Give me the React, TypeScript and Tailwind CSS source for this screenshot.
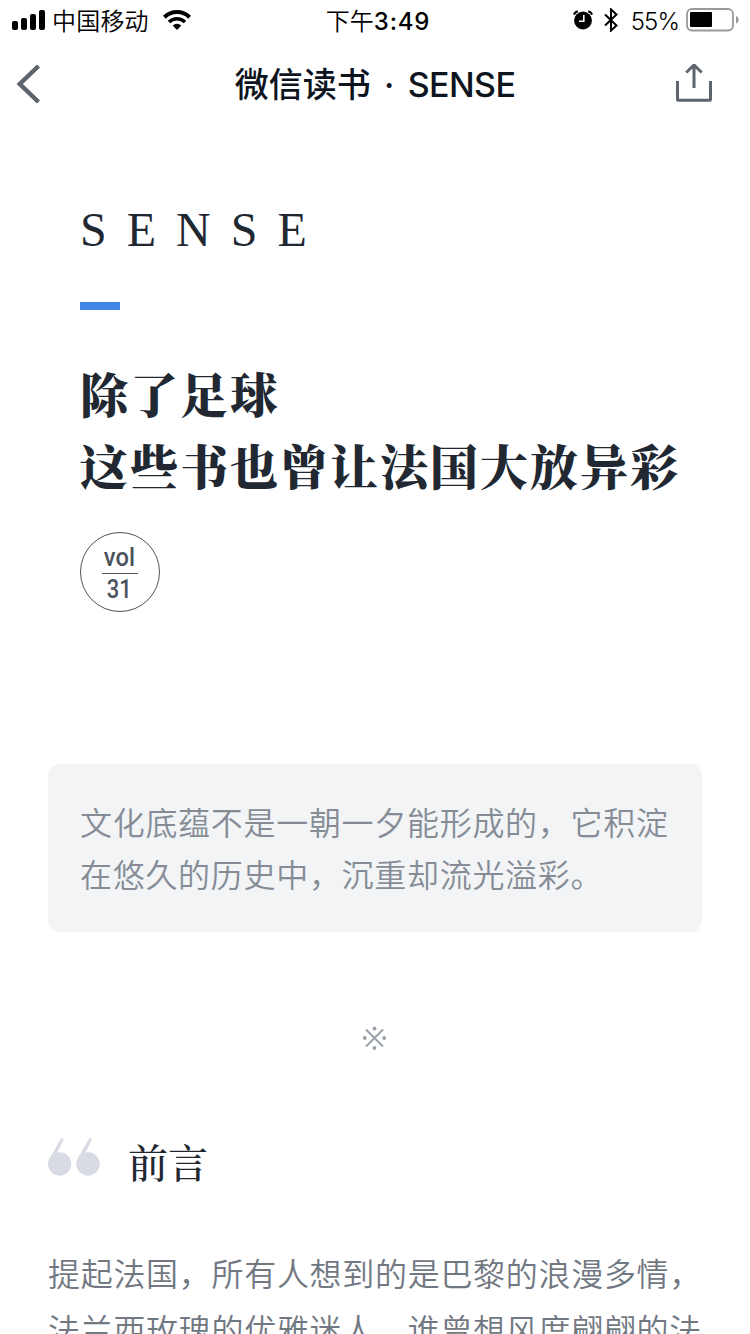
import React from "react";

const SANS = "font-['Inter','Noto_Sans_CJK_SC',sans-serif]";
const SONG = "font-['Noto_Serif_CJK_SC','Source_Han_Serif_SC','Songti_SC','Noto_Sans_CJK_SC',serif]";

const titleLines = ["除了足球", "这些书也曾让法国大放异彩"];
const quoteLines = ["文化底蕴不是一朝一夕能形成的，它积淀", "在悠久的历史中，沉重却流光溢彩。"];
const bodyLines = ["提起法国，所有人想到的是巴黎的浪漫多情，", "法兰西玫瑰的优雅迷人，谁曾想风度翩翩的法"];

function StatusBar(): JSX.Element {
    return (
        <div className="grid h-10 shrink-0 grid-cols-3 items-center text-black">
            <div className="flex items-center pl-3">
                <svg width="33" height="20" viewBox="0 0 33 20">
                    <rect x="0" y="11" width="6" height="9" rx="2" />
                    <rect x="9" y="8" width="6" height="12" rx="2" />
                    <rect x="18" y="4" width="6" height="16" rx="2" />
                    <rect x="27" y="0" width="6" height="20" rx="2" />
                </svg>
                <span className="ml-[7px] pt-[3px] text-[24px] leading-[37px] font-[350] tracking-[0.2px]">中国移动</span>
                <svg className="ml-[14px]" width="28" height="20" viewBox="0 0 28 20">
                    <path d="M1.4 7.2a18 18 0 0 1 25.2 0" fill="none" stroke="#000" strokeWidth="4" />
                    <path d="M6 12a11.4 11.4 0 0 1 16 0" fill="none" stroke="#000" strokeWidth="3.6" />
                    <path d="M14 20l-4.3-4.4a6.2 6.2 0 0 1 8.6 0z" />
                </svg>
            </div>
            <div className="flex items-center justify-center pt-[3px] pl-1.5 leading-[37px]">
                <span className="text-[24px] font-[350]">下午</span>
                <span className="text-[24px] font-medium tracking-[0.8px]">3:49</span>
            </div>
            <div className="flex items-center justify-end pr-[11px]">
                <svg width="20" height="20" viewBox="0 0 20 20">
                    <circle cx="10" cy="10.500" r="8.900" />
                    <path d="M.9 4.600Q2 2 4.800 1.300M19.100 4.600Q18 2 15.200 1.300" fill="none" stroke="#000" strokeWidth="2.200" />
                    <path d="M10.800 5v6.300H6" fill="none" stroke="#fff" strokeWidth="1.600" />
                </svg>
                <svg className="ml-[11px]" width="14" height="24" viewBox="0 0 14 24">
                    <path d="M1 6.500l11.500 11L7 22.600V1.400l5.500 5.100L1 17.500" fill="none" stroke="#000" strokeWidth="2" />
                </svg>
                <span className="ml-[13px] pt-[3px] text-[24px] leading-[37px] font-[350] tracking-[-0.9px]">55%</span>
                <svg className="ml-[7px]" width="53" height="24" viewBox="0 0 53 24">
                    <rect x="1" y="1" width="46" height="21.500" rx="5" fill="none" stroke="#999" strokeWidth="1.800" />
                    <rect x="4" y="4" width="22" height="15" rx="1" />
                    <path d="M50 8c3.500 1 3.500 6.500 0 7.500z" fill="#999" />
                </svg>
            </div>
        </div>
    );
}

function NavBar(): JSX.Element {
    return (
        <div className="flex h-[88px] shrink-0 items-center justify-between pr-[38px] pl-4">
            <svg width="60" height="40" viewBox="0 0 60 40" fill="none" stroke="#5d646e" strokeWidth="4.500">
                <path d="M22.500 2L3.800 20l18.700 18" />
            </svg>
            <h1 className="mr-[22px] flex pt-px text-[34px] leading-[87px] font-medium text-[#0d141e]">
                <span className="ml-[22px]">微信读书</span>
                <span className="w-[37px] text-center">·</span>
                <span className="font-[550] tracking-[-0.6px]">SENSE</span>
            </h1>
            <svg width="38" height="40" viewBox="0 0 38 40" fill="none" stroke="#5d646e" strokeWidth="3">
                <path d="M3.500 17v18.200q0 1 1 1h31q1 0 1-1V17M20 24V1M12.300 8.500L20 1l7.700 7.500" />
            </svg>
        </div>
    );
}

function VolBadge(): JSX.Element {
    return (
        <div className="mt-7 flex h-20 w-20 flex-col items-center rounded-full border border-[#4c535d] pt-[11px] font-['Roboto',sans-serif] text-[25px] font-medium text-[#4c535d]">
            <span className="mr-0.5 h-[29px] origin-center scale-x-95 leading-[28px]">vol</span>
            <div className="h-px w-9 bg-[#4c535d]" />
            <span className="mr-0.5 h-[30px] origin-center scale-x-88 leading-[31px]">31</span>
        </div>
    );
}

export default function App(): JSX.Element {
    return (
        <div lang="zh-CN" className={`flex h-[1334px] w-[750px] flex-col overflow-hidden bg-white ${SANS}`}>
            <StatusBar />
            <NavBar />
            <header className="flex flex-col px-20 pt-[72px] text-[#212832]">
                <div className="font-['Liberation_Serif',serif] text-[48px] leading-[60px] tracking-[20px]">SENSE</div>
                <div className="mt-[42px] h-2 w-10 bg-[#4285e5]" />
                <h2 className={`mt-[47px] mb-[3px] text-[48px] leading-[72px] font-black tracking-[2px] whitespace-nowrap ${SONG}`}>
                    {titleLines.map((line) => (
                        <div key={line}>{line}</div>
                    ))}
                </h2>
                <VolBadge />
            </header>
            <blockquote className="mx-12 mt-[152px] h-[168px] shrink-0 rounded-xl bg-[#f3f4f6] px-8 pt-[34px] text-[32px] leading-[52px] font-[350] tracking-[0.7px] whitespace-nowrap text-[#858c96]">
                {quoteLines.map((line) => (
                    <p key={line}>{line}</p>
                ))}
            </blockquote>
            <div className="mt-[93px] flex justify-center">
                <svg width="26" height="26" viewBox="0 0 26 26" fill="#9ba1aa">
                    <path d="M4 4.500l17 17M21 4.500l-17 17" stroke="#9ba1aa" strokeWidth="2" />
                    <circle cx="12.500" cy="3.500" r="1.900" />
                    <circle cx="2.800" cy="13" r="1.900" />
                    <circle cx="22.200" cy="13" r="1.900" />
                    <circle cx="12.500" cy="23" r="1.900" />
                </svg>
            </div>
            <section className="mt-20 flex flex-col px-12">
                <div className="flex h-[60px] items-center">
                    <svg className="mb-2" width="52" height="40" viewBox="0 0 52 40" fill="#d8dbe3">
                        <circle cx="11.700" cy="27" r="11.700" />
                        <circle cx="40" cy="27" r="11.700" />
                        <path d="M1.800 21L13.300 1l2.500 1.200L8.500 17zM30 21l11.500-20 2.500 1.200L36.800 17z" />
                    </svg>
                    <h3 className={`ml-7 text-[40px] leading-[60px] font-medium text-[#212832] ${SONG}`}>前言</h3>
                </div>
                <div className="mt-[56px] text-[32px] leading-[56px] font-[350] tracking-[0.7px] whitespace-nowrap text-[#717882]">
                    {bodyLines.map((line) => (
                        <p key={line}>{line}</p>
                    ))}
                </div>
            </section>
        </div>
    );
}
